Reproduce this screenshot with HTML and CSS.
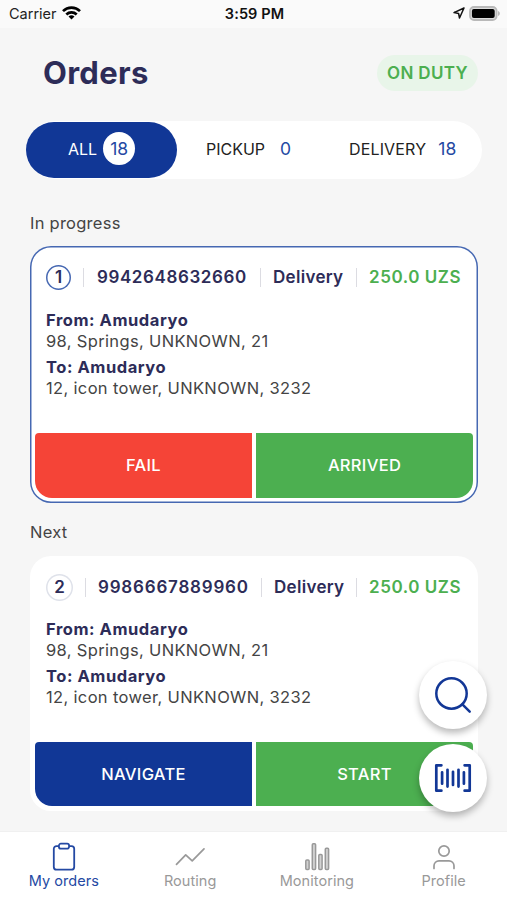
FILE: index.html
```html
<!DOCTYPE html>
<html lang="en">
<head>
<meta charset="utf-8">
<title>Orders</title>
<link rel="stylesheet" href="styles.css">
</head>
<body>
<div class="app">
  <header class="status">
    <div class="carrier">
      <span>Carrier</span>
      <svg width="19" height="14" viewBox="0 0 19 14" fill="none" stroke="#000" stroke-width="2.7"><path d="M1 5.1a12.2 12.2 0 0 1 17 0"/><path d="M4.3 8.5a7.6 7.6 0 0 1 10.4 0"/><path d="M9.5 13.6 6.5 10.6a4.3 4.3 0 0 1 6 0z" fill="#000" stroke="none"/></svg>
    </div>
    <div class="clock">3:59 PM</div>
    <div class="indicators">
      <svg width="12" height="12" viewBox="0 0 12 12" fill="none" stroke="#111" stroke-width="1.5" stroke-linejoin="round"><path d="M11 1 1 5.6l4.6.9.9 4.5z"/></svg>
      <svg width="31" height="15" viewBox="0 0 31 15"><rect x="1" y="1" width="26.600" height="13" rx="4" fill="#ddd" stroke="#b9b9b9" stroke-width="1.800"/><rect x="2.900" y="2.900" width="22.800" height="9.200" rx="2"/><path d="M29.200 5c2 .8 2 4.200 0 5z" fill="#aaa"/></svg>
    </div>
  </header>

  <div class="heading">
    <h1>Orders</h1>
    <span class="duty">ON DUTY</span>
  </div>

  <div class="filters">
    <div class="filter active"><span>ALL</span><b>18</b></div>
    <div class="filter pickup"><span>PICKUP</span><b>0</b></div>
    <div class="filter delivery"><span>DELIVERY</span><b>18</b></div>
  </div>

  <h2 class="section first">In progress</h2>
  <article class="card current">
    <div class="summary">
      <span class="index">1</span><i></i><span class="number">9942648632660</span><i></i><span class="kind">Delivery</span><i></i><span class="price">250.0 UZS</span>
    </div>
    <div class="route">
      <strong>From: Amudaryo</strong>
      <p>98, Springs, UNKNOWN, 21</p>
      <strong class="to">To: Amudaryo</strong>
      <p>12, icon tower, UNKNOWN, 3232</p>
    </div>
    <div class="actions"><button class="red">FAIL</button><button class="green">ARRIVED</button></div>
  </article>

  <h2 class="section second">Next</h2>
  <article class="card next">
    <div class="summary">
      <span class="index">2</span><i></i><span class="number">9986667889960</span><i></i><span class="kind">Delivery</span><i></i><span class="price">250.0 UZS</span>
    </div>
    <div class="route">
      <strong>From: Amudaryo</strong>
      <p>98, Springs, UNKNOWN, 21</p>
      <strong class="to">To: Amudaryo</strong>
      <p>12, icon tower, UNKNOWN, 3232</p>
    </div>
    <div class="actions"><button class="blue">NAVIGATE</button><button class="green">START</button></div>
  </article>

  <div class="floating">
    <div class="fab"><svg width="38" height="38" viewBox="0 0 38 38" fill="none" stroke="#123796" stroke-width="2.5" stroke-linecap="round"><circle cx="17.500" cy="17.500" r="15.200"/><path d="m28.400 28.400 7.300 7.200"/></svg></div>
    <div class="fab"><svg width="38" height="30" viewBox="0 0 38 30" fill="none" stroke="#123796" stroke-width="2.700" stroke-linecap="round" stroke-linejoin="round"><path d="M7.400 2.300H2.300v25.400h5.100M30.600 2.300h5.100v25.400h-5.100M8.100 9.300v11.400M13.500 6.800v16.800M19 8.800v13.200M24.500 6.800v16.800M29.900 9.300v11.400"/></svg></div>
  </div>

  <nav class="tabs">
    <div class="tab on"><svg width="30" height="30" viewBox="0 0 30 30" fill="none" stroke="#2449a3" stroke-width="1.800"><path d="M10.200 4.100H7.500a2.700 2.700 0 0 0-2.700 2.700v18.100a2.700 2.700 0 0 0 2.700 2.700h15a2.700 2.700 0 0 0 2.700-2.700V6.800a2.700 2.700 0 0 0-2.700-2.700h-2.700"/><rect x="9.900" y="1.700" width="10.200" height="5" rx="2"/></svg><span>My orders</span></div>
    <div class="tab"><svg width="30" height="30" viewBox="0 0 30 30" fill="none" stroke="#999" stroke-width="1.700" stroke-linecap="round" stroke-linejoin="round"><path d="m1.500 22.300 9.200-9.400 6.500 6L29 6.800"/></svg><span>Routing</span></div>
    <div class="tab"><svg width="30" height="30" viewBox="0 0 30 30" fill="#d2d2d2" stroke="#999" stroke-width="1.500"><rect x="3.800" y="17.900" width="3.300" height="9.700" rx="1"/><rect x="10.300" y="1.700" width="3.300" height="25.900" rx="1"/><rect x="16.800" y="12.600" width="3.300" height="15" rx="1"/><rect x="23.300" y="6.300" width="3.300" height="21.300" rx="1"/></svg><span>Monitoring</span></div>
    <div class="tab"><svg width="30" height="30" viewBox="0 0 30 30" fill="none" stroke="#999" stroke-width="1.700" stroke-linecap="round"><circle cx="15" cy="9" r="5.200"/><path d="M5 26.400v-2.600a5 5 0 0 1 5-5h10a5 5 0 0 1 5 5v2.600"/></svg><span>Profile</span></div>
  </nav>
</div>
</body>
</html>
```
FILE: styles.css
```css
* { box-sizing: border-box; }
body { margin: 0; background: #f6f6f6; font-family: Inter, "Liberation Sans", sans-serif; color: #444; }
.app { width: 507px; height: 900px; overflow: hidden; position: relative; display: flex; flex-direction: column; }
.app > * { flex-shrink: 0; }
h1, h2, p { margin: 0; font-weight: 400; }

.status { height: 28px; background: #fafafa; display: grid; grid-template-columns: 1fr auto 1fr; align-items: center; padding: 0 7px 2px 9px; color: #222; font-size: 14.5px; }
.carrier { display: flex; align-items: center; gap: 5px; }
.carrier svg { margin-top: -1px; }
.clock { font-weight: 600; color: #111; letter-spacing: .1px; }
.indicators { display: flex; justify-content: flex-end; align-items: center; gap: 4px; }

.heading { height: 93px; display: flex; justify-content: space-between; align-items: center; padding: 0 29px 3px 43px; }
h1 { font-size: 31px; font-weight: 650; color: #2d2c58; letter-spacing: .3px; line-height: 36px; }
.duty { width: 101px; height: 36px; border-radius: 18px; background: #e8f5e9; color: #4caf50; font-size: 17px; font-weight: 600; display: flex; align-items: center; justify-content: center; letter-spacing: .35px; }

.filters { height: 58px; margin: 0 25px 0 26px; background: #fff; border-radius: 29px; display: flex; align-items: center; color: #222; font-size: 16px; }
.filter { display: flex; align-items: center; padding-bottom: 3px; }
.filter b { font-weight: 400; color: #2449a3; font-size: 17.5px; }
.active { width: 151px; height: 56px; border-radius: 28px; background: #113796; color: #fff; padding-left: 42px; gap: 6px; }
.active b { width: 32px; height: 33px; border-radius: 50%; background: #fff; display: flex; align-items: center; justify-content: center; }
.pickup { width: 144px; padding-left: 29px; gap: 15px; }
.delivery { padding-left: 28px; gap: 12px; letter-spacing: .15px; }

.section { font-size: 16.5px; color: #444; height: 24px; line-height: 24px; margin-left: 30px; letter-spacing: .25px; }
.first { margin-top: 32px; }
.second { margin-top: 17px; }
.card { width: 448px; height: 255px; margin-left: 30px; background: #fff; border-radius: 21px; padding: 1px 5px 5px; display: flex; flex-direction: column; }
.current { margin-top: 11px; box-shadow: inset 0 0 0 1.500px #4668b2; height: 257px; }
.next { margin-top: 12px; }
.summary { height: 60px; padding-left: 11px; display: flex; align-items: center; color: #2d2c58; font-size: 17px; font-weight: 600; letter-spacing: .4px; }
.summary i { width: 1px; height: 19px; background: #dcdce2; flex: none; }
.index { width: 25px; height: 25px; box-shadow: inset 0 0 0 1.500px #4668b2; border-radius: 50%; display: flex; align-items: center; justify-content: center; letter-spacing: 0; margin-right: 12px; }
.number { width: 176px; padding-left: 13px; white-space: nowrap; letter-spacing: .6px; }
.kind { width: 95px; padding-left: 12px; letter-spacing: .3px; }
.price { padding-left: 12px; color: #4caf50; white-space: nowrap; letter-spacing: .55px; }
.next .index { width: 27px; height: 27px; box-shadow: inset 0 0 0 1.500px #dfe2ea; }
.next .number { width: 175px; padding-left: 12px; letter-spacing: .8px; }
.next .kind { width: 94px; }
.route { height: 126px; padding: 3px 0 0 11px; font-size: 16.5px; line-height: 20.700px; letter-spacing: .34px; }
.next .route { height: 125px; padding-top: 2px; }
.route strong { display: block; font-weight: 650; color: #2d2c58; letter-spacing: .55px; }
.to { margin-top: 6px; }
.actions { height: 64px; display: grid; grid-template-columns: 1fr 1fr; gap: 4px; }
.current .actions { height: 65px; }
button { border: 0; padding: 0; color: #fff; font: 500 16.5px Inter, sans-serif; letter-spacing: .3px; }
.current button { padding-bottom: 1px; }
button:first-child { border-radius: 4px 0 0 17px; }
button:last-child { border-radius: 0 4px 17px 0; }
.red { background: #f54437; }
.green { background: #4caf50; }
.blue { background: #113796; }

.floating { position: absolute; right: 20px; top: 661px; display: grid; gap: 15px; }
.fab { width: 68px; height: 68px; border-radius: 50%; background: #fff; box-shadow: 0 4px 7px rgba(0,0,0,.28); display: flex; align-items: center; justify-content: center; }

.tabs { position: absolute; inset: auto 0 0; height: 69px; background: #fff; border-top: 1px solid #f0f0f0; display: grid; grid-template-columns: repeat(4, 1fr); color: #999; font-size: 14.500px; }
.tab { display: flex; flex-direction: column; align-items: center; padding-top: 10px; line-height: 17px; letter-spacing: .05px; }
.on { color: #2449a3; padding-left: 1px; }
```
